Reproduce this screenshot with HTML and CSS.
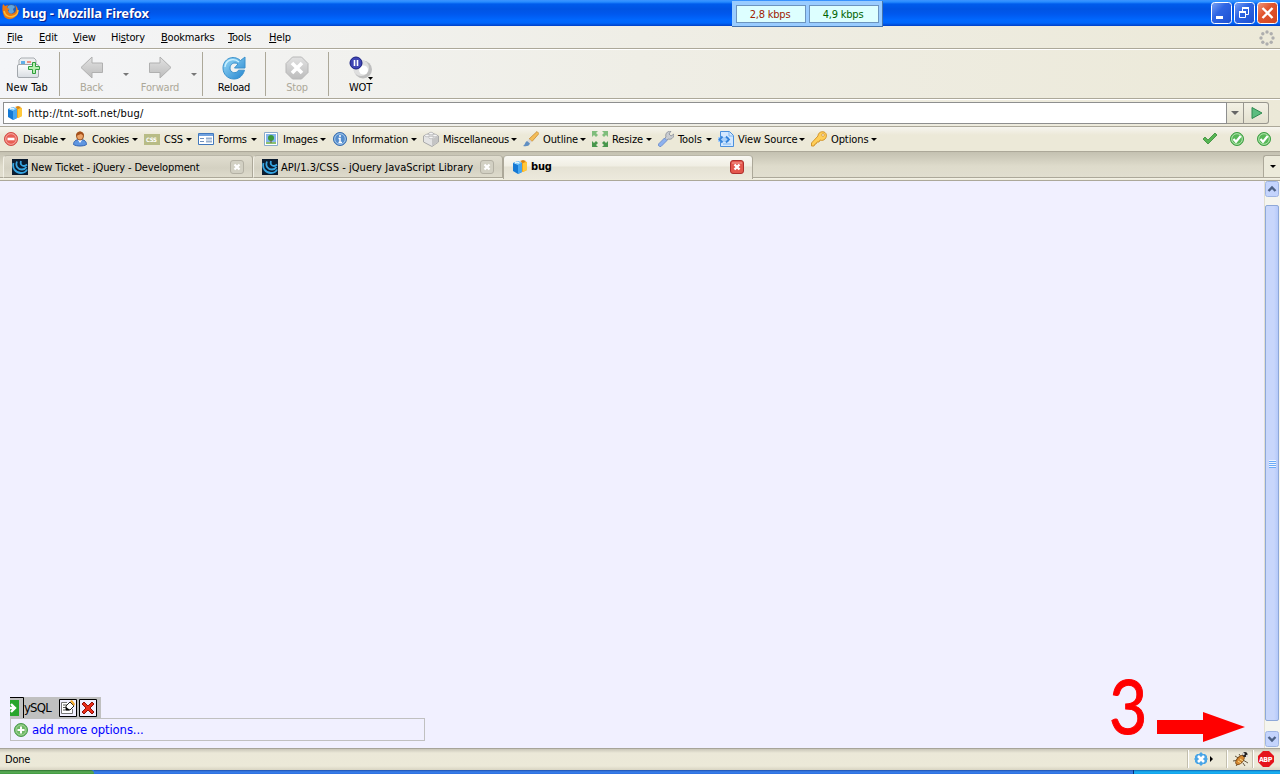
FILE: index.html
```html
<!DOCTYPE html>
<html lang="en">
<head>
  <meta charset="UTF-8">
  <title>bug - Mozilla Firefox</title>
  <link rel="stylesheet" href="styles.css">
</head>
<body>
  <svg class="defs" width="0" height="0">
    <defs>
      <linearGradient id="blue" x1="0" y1="0" x2="1" y2="1"><stop offset="0" stop-color="#9bdcf8"/><stop offset="1" stop-color="#2384cf"/></linearGradient>
      <linearGradient id="winBlue" x1="0" y1="0" x2="1" y2="1"><stop offset="0" stop-color="#7fa4f5"/><stop offset=".4" stop-color="#2f66e4"/><stop offset="1" stop-color="#1c4fd0"/></linearGradient>
      <linearGradient id="winRed" x1="0" y1="0" x2="1" y2="1"><stop offset="0" stop-color="#f09a80"/><stop offset=".4" stop-color="#e2562f"/><stop offset="1" stop-color="#d04420"/></linearGradient>
      <linearGradient id="grey" x1="0" y1="0" x2="0" y2="1"><stop offset="0" stop-color="#e2e2e2"/><stop offset="1" stop-color="#bcbcbc"/></linearGradient>
      <linearGradient id="page" x1="0" y1="0" x2="0" y2="1"><stop offset="0" stop-color="#fff"/><stop offset="1" stop-color="#d8dde2"/></linearGradient>
      <symbol id="boxes" viewBox="0 0 16 16">
        <path d="M8 4l4-2 3 1v8l-4 2-3-1z" fill="#f6a416"/><path d="M11 4l4-1v8l-4 2z" fill="#ffc93c"/>
        <path d="M8 2l3-1 3 1-3 2z" fill="#d88410"/>
        <path d="M1 4l5-2 4 2v9l-4 2-5-3z" fill="#1478d4"/><path d="M1 4l5-2 4 2-4 2z" fill="#8bd0fb"/><path d="M6 6l4-2v9l-4 2z" fill="#46a6f0"/>
        <path d="M3 4l2-1 2 1" stroke="#fff" fill="none"/>
      </symbol>
      <symbol id="jquery" viewBox="0 0 16 16">
        <path d="M0 0h16v16H0z" fill="#0b1c30"/>
        <path d="M1.500 4c-1.500 5 2 10 7.500 10 3 0 5-1 6-3.500M5 2.500c-2 4.500 1 8 5 8 2 0 3.500-1 4.500-2.500M9 2c-1 3 .5 5 3 5 1.500 0 2-.5 3-1.500" fill="none" stroke="#36a5e2" stroke-width="1.800"/>
      </symbol>
      <symbol id="ok" viewBox="0 0 16 16">
        <circle cx="8" cy="8" r="6.500" fill="#58b858" stroke="#3c9e42"/><circle cx="8" cy="8" r="5.300" fill="none" stroke="#b6e5b2"/>
        <path d="M4.500 8l2.500 2.800L11.700 5" fill="none" stroke="#fff" stroke-width="2.200"/>
      </symbol>
      <symbol id="closeTab" viewBox="0 0 14 14">
        <rect x=".5" y=".5" width="13" height="13" rx="2.500" fill="#d2d0c3" stroke="#b4b1a4"/>
        <path d="M4.500 4.500l5 5M9.500 4.500l-5 5" stroke="#fff" stroke-width="2.200"/>
      </symbol>
    </defs>
  </svg>

  <div class="titlebar">
    <svg class="logo" width="17" height="17" viewBox="0 0 17 17">
      <circle cx="9" cy="8" r="7" fill="#2a5fae"/><path d="M6 3c3-2 6-1 7 1l-2 2 1 3-3 2-3-2 1-2-2-1z" fill="#5fa3dc"/>
      <path d="M1 1l2 2 3-1-1 3 3 1-2 1c0 3 3 5 6 3 2-1 3-4 1-8 4 3 4 9 0 12-3 3-9 3-11-1C0 9 0 4 1 1z" fill="#e97813"/>
      <path d="M2 8c1 5 6 7 10 5 3-1 4-4 4-6" fill="none" stroke="#ffbd35" stroke-width="1.400"/>
    </svg>
    <span class="title">bug - Mozilla Firefox</span>
    <div class="window-buttons">
      <svg width="21" height="22" viewBox="0 0 21 22"><rect x=".5" y=".5" width="20" height="21" rx="3" fill="url(#winBlue)" stroke="#fff"/><path d="M5 14h7v3H5z" fill="#fff"/></svg>
      <svg width="21" height="22" viewBox="0 0 21 22"><rect x=".5" y=".5" width="20" height="21" rx="3" fill="url(#winBlue)" stroke="#fff"/><path d="M8.500 9V6.500h6v6H12M5.500 10.500h6v5h-6z" fill="none" stroke="#fff"/><path d="M8 6h7M5 10h7" stroke="#fff" stroke-width="2"/></svg>
      <svg width="21" height="22" viewBox="0 0 21 22"><rect x=".5" y=".5" width="20" height="21" rx="3" fill="url(#winRed)" stroke="#fff"/><path d="M5.500 6l10 10M15.500 6l-10 10" stroke="#fff" stroke-width="2.400"/></svg>
    </div>
    <div class="speed">
      <span class="down">2,8 kbps</span>
      <span class="up">4,9 kbps</span>
    </div>
  </div>

  <div class="menubar">
    <span><u>F</u>ile</span>
    <span><u>E</u>dit</span>
    <span><u>V</u>iew</span>
    <span>Hi<u>s</u>tory</span>
    <span><u>B</u>ookmarks</span>
    <span><u>T</u>ools</span>
    <span><u>H</u>elp</span>
    <svg class="throbber" width="16" height="16" viewBox="0 0 16 16">
      <g fill="#aeaeae"><circle cx="8" cy="2" r="1.700"/><circle cx="12.200" cy="3.800" r="1.700"/><circle cx="14" cy="8" r="1.700"/><circle cx="12.200" cy="12.200" r="1.700"/><circle cx="8" cy="14" r="1.700"/><circle cx="3.800" cy="12.200" r="1.700"/><circle cx="2" cy="8" r="1.700"/><circle cx="3.800" cy="3.800" r="1.700"/></g>
    </svg>
  </div>

  <div class="navbar">
    <div class="nav newtab">
      <svg width="24" height="24" viewBox="0 0 24 24">
        <path d="M3 8V4l2-2h13l2 2v4" fill="#eceef0" stroke="#a9adb1"/><path d="M5 5h4v3H5z" fill="#62aee8"/><path d="M11 6h4" stroke="#ed9082" stroke-width="2"/>
        <rect x="1.500" y="8.500" width="21" height="13" rx="1.500" fill="url(#page)" stroke="#a2a7ac"/>
        <path d="M16.500 6.500h3v4h4v3h-4v4h-3v-4h-4v-3h4z" fill="#b6efae" stroke="#2f9d3c"/>
      </svg>
      <span>New Tab</span>
    </div>
    <div class="nav back off">
      <svg width="24" height="24" viewBox="0 0 24 24"><path d="M1 11.500L12 1v6h10.500v9.500H12V22z" fill="url(#grey)" stroke="#b0b0b0"/></svg>
      <span>Back</span>
    </div>
    <i class="drop off"></i>
    <div class="nav forward off">
      <svg width="24" height="24" viewBox="0 0 24 24"><path d="M23 11.500L12 1v6H1.500v9.500H12V22z" fill="url(#grey)" stroke="#b0b0b0"/></svg>
      <span>Forward</span>
    </div>
    <i class="drop off"></i>
    <div class="nav reload">
      <svg width="24" height="24" viewBox="0 0 24 24">
        <path d="M18.500 4.500L23 1v11H12.500l3.500-4c-4-2.500-8 0-8 4.200 0 5 6.500 6 8.500 2h6C20.500 21 16 23 12 23 5.500 23 1 18 1 12 1 3 11-2 18.500 4.500z" fill="url(#blue)" stroke="#3a91cc"/>
        <path d="M3 11c1-8 9-9 14-5" fill="none" stroke="#caf0ff" stroke-width="1.300"/>
      </svg>
      <span>Reload</span>
    </div>
    <div class="nav stop off">
      <svg width="24" height="24" viewBox="0 0 24 24"><path d="M7.500 1h9L23 7.500v9L16.500 23h-9L1 16.500v-9z" fill="url(#grey)" stroke="#b8b8b8"/><path d="M7 7l10 10M17 7L7 17" stroke="#fff" stroke-width="3.600"/></svg>
      <span>Stop</span>
    </div>
    <div class="nav wot">
      <svg width="24" height="24" viewBox="0 0 24 24">
        <circle cx="14" cy="13.500" r="9" fill="#bfbfbf"/><circle cx="12" cy="12" r="8" fill="#dfdfdf"/><circle cx="14.500" cy="14" r="4.500" fill="#fff"/>
        <circle cx="7" cy="7" r="6" fill="#3f45b4" stroke="#171d80"/><path d="M5.500 4v6M8.500 4v6" stroke="#fff" stroke-width="1.600"/>
        <path d="M19 21h5l-2.500 3z"/>
      </svg>
      <span>WOT</span>
    </div>
  </div>

  <div class="urlbar">
    <div class="url">
      <svg width="16" height="16"><use href="#boxes"/></svg>
      <span>http://tnt-soft.net/bug/</span>
    </div>
    <div class="url-drop"><i class="drop"></i></div>
    <div class="go"><svg width="12" height="12" viewBox="0 0 12 12"><path d="M1 .5L11 6 1 11.500z" fill="#5cbd80" stroke="#2f8a50"/></svg></div>
  </div>

  <div class="devbar">
    <div class="dev disable">
      <svg width="16" height="16" viewBox="0 0 16 16"><circle cx="8" cy="8" r="6.500" fill="#e95f55" stroke="#d04c46"/><circle cx="8" cy="8" r="5.300" fill="none" stroke="#f4aaa2"/><path d="M4.500 8h7" stroke="#fff" stroke-width="2.600"/></svg>
      <span>Disable</span><i class="drop"></i>
    </div>
    <div class="dev cookies">
      <svg width="16" height="16" viewBox="0 0 16 16"><path d="M1.500 13.500c0-3 2-5 6.500-5s6.500 2 6.500 5c-3 2-10 2-13 0z" fill="#5f96e0" stroke="#3465b2"/><path d="M6 9l2 3 2-3" fill="#fff"/><ellipse cx="8" cy="5" rx="3.500" ry="4" fill="#eda468" stroke="#9a5522"/><path d="M4 5c0-6 8-6 8 0L9 3z" fill="#a4501b"/></svg>
      <span>Cookies</span><i class="drop"></i>
    </div>
    <div class="dev css">
      <svg width="16" height="16" viewBox="0 0 16 16"><path d="M0 3h16v11H0z" fill="#b8bc86"/><text x="2" y="11" class="css-mark">CSS</text></svg>
      <span>CSS</span><i class="drop"></i>
    </div>
    <div class="dev forms">
      <svg width="16" height="16" viewBox="0 0 16 16"><path d="M.5 2.500h15v11H.5z" fill="#fff" stroke="#4178bc"/><path d="M1 4h14" stroke="#70a2df" stroke-width="2"/><path d="M2 7.500h4M2 10.500h4" stroke="#7192bd"/><path d="M8 7.500h6M8 10.500h6" stroke="#99b1cf" stroke-width="2"/></svg>
      <span>Forms</span><i class="drop"></i>
    </div>
    <div class="dev images">
      <svg width="16" height="16" viewBox="0 0 16 16"><path d="M1.500 1.500h13v13h-13z" fill="#fff" stroke="#8caacb"/><path d="M3 3h10v8H3z" fill="#86b5ed"/><path d="M3 11h10v2H3z" fill="#8cc070"/><circle cx="8" cy="7" r="3" fill="#3b993b"/><path d="M8 9v3" stroke="#755c37"/></svg>
      <span>Images</span><i class="drop"></i>
    </div>
    <div class="dev information">
      <svg width="16" height="16" viewBox="0 0 16 16"><circle cx="8" cy="8" r="6.500" fill="#558dcc" stroke="#376caf"/><circle cx="8" cy="8" r="5.300" fill="none" stroke="#a7cbed"/><path d="M8 4v2M6.500 7.500H8v3.500M6.500 11.500h3.500" fill="none" stroke="#fff" stroke-width="1.500"/></svg>
      <span>Information</span><i class="drop"></i>
    </div>
    <div class="dev misc">
      <svg width="16" height="16" viewBox="0 0 16 16"><path d="M.5 5L8 1.500 15.500 5v6L9 15.500 .5 11z" fill="#e4e4e4" stroke="#a8a8a8"/><path d="M9 8l6-3v6l-6 4z" fill="#c4c4c4"/><g fill="#f6f6f6" stroke="#b1b1b1" stroke-width=".7"><ellipse cx="8" cy="2.500" rx="2.200" ry="1.300"/><ellipse cx="4" cy="4.500" rx="2.200" ry="1.300"/><ellipse cx="12" cy="4.500" rx="2.200" ry="1.300"/><ellipse cx="8" cy="6.500" rx="2.200" ry="1.300"/></g></svg>
      <span>Miscellaneous</span><i class="drop"></i>
    </div>
    <div class="dev outline">
      <svg width="16" height="16" viewBox="0 0 16 16"><path d="M14 .5l2 2-7 8-3-2.500z" fill="#f4bd58" stroke="#bf8229" stroke-width=".7"/><path d="M6 8l3 2.500-2 2-3-2.500z" fill="#d8d8d8"/><path d="M4 10l3 2.500c-1 3-4 3-7 2.500 2-1 2-4 4-5z" fill="#608fc2"/></svg>
      <span>Outline</span><i class="drop"></i>
    </div>
    <div class="dev resize">
      <svg width="16" height="16" viewBox="0 0 16 16"><path d="M0 0h6L4 2l2 2-2 2-2-2-2 2zM16 0v6l-2-2-2 2-2-2 2-2-2-2z" fill="#7fbd7b"/><path d="M0 16v-6l2 2 2-2 2 2-2 2 2 2zM16 16h-6l2-2-2-2 2-2 2 2 2-2z" fill="#49974d"/></svg>
      <span>Resize</span><i class="drop"></i>
    </div>
    <div class="dev tools">
      <svg width="16" height="16" viewBox="0 0 16 16"><path d="M8 6c-1-3 1-6 5-6l-2 3 2 2 3-2c0 4-3 6-6 5l-2 2-2-2z" fill="#c9ccd1" stroke="#858a94" stroke-width=".8"/><path d="M6.500 7L9 9.500l-6 6C1 16 0 14.500 .5 13z" fill="#8eb2ef" stroke="#6686c7" stroke-width=".8"/></svg>
      <span>Tools</span><i class="drop"></i>
    </div>
    <div class="dev source">
      <svg width="16" height="16" viewBox="0 0 16 16"><path d="M2.500 .5h9l4 4v11h-13z" fill="#d3e8ff" stroke="#4b90dd"/><path d="M11 1v4h4M5 13h8" fill="none" stroke="#7cb5ef"/><path d="M0 6h11v5H0z" fill="#a9d0fa"/><path d="M4.500 5.500L1.500 8.500l3 3M8 5.500l3 3-3 3" fill="none" stroke="#3383db" stroke-width="1.800"/></svg>
      <span>View Source</span><i class="drop"></i>
    </div>
    <div class="dev options">
      <svg width="16" height="16" viewBox="0 0 16 16"><path d="M7 5c0-3 3-5 6-4 3 1 3 5 1 7-1 1-3 2-5 1l-1 2H6l-1 2H4l-1 2H.5v-3z" fill="#ffce57" stroke="#d2952c"/><circle cx="12" cy="4" r="1.300" fill="#fff" stroke="#c98820" stroke-width=".7"/></svg>
      <span>Options</span><i class="drop"></i>
    </div>
    <div class="checks">
      <svg width="16" height="16" viewBox="0 0 16 16"><path d="M1 8l2-2 3 3 7-7 2 2-9 9z" fill="#57b553" stroke="#368c37" stroke-width=".8"/></svg>
      <svg width="16" height="16"><use href="#ok"/></svg>
      <svg width="16" height="16"><use href="#ok"/></svg>
    </div>
  </div>

  <div class="tabs">
    <div class="tab">
      <svg width="16" height="16"><use href="#jquery"/></svg>
      <span>New Ticket - jQuery - Development</span>
      <svg class="close" width="14" height="14"><use href="#closeTab"/></svg>
    </div>
    <div class="tab wide">
      <svg width="16" height="16"><use href="#jquery"/></svg>
      <span>API/1.3/CSS - jQuery JavaScript Library</span>
      <svg class="close" width="14" height="14"><use href="#closeTab"/></svg>
    </div>
    <div class="tab active">
      <svg width="16" height="16"><use href="#boxes"/></svg>
      <span>bug</span>
      <svg class="close" width="14" height="14" viewBox="0 0 14 14"><rect x=".5" y=".5" width="13" height="13" rx="2.500" fill="#e4574d" stroke="#ad2f2d"/><path d="M2 3h10" stroke="#f3a49b"/><path d="M4.500 4.500l5 5M9.500 4.500l-5 5" stroke="#fff" stroke-width="2.400"/></svg>
    </div>
    <div class="all-tabs"><i class="drop"></i></div>
  </div>

  <div class="main">
    <div class="content">
      <div class="option">
        <svg class="arrow-box" width="14" height="22" viewBox="0 0 14 22"><path d="M0 3h9v16H0z" fill="#28a52c"/><path d="M-2 11h6M1 7l4 4-4 4" fill="none" stroke="#fff" stroke-width="2.400"/><path d="M0 .5h13.500v21H0" fill="none" stroke="#000"/></svg>
        <span>ySQL</span>
        <svg width="18" height="18" viewBox="0 0 18 18"><path d="M.5 .5h17v17H.5z" fill="#f1f0ff" stroke="#000"/><path d="M8 3.500H2.500v11h11V10" fill="#fff" stroke="#777"/><path d="M4 6h4M4 8.500h3M4 11h6" stroke="#555"/><path d="M7 11V7l4-4 4 4-4 4z" fill="#fff" stroke="#222"/><path d="M7 8v3h4z"/><path d="M11 2l2-1 3 4-1 2z" fill="#f1a92b"/></svg>
        <svg width="18" height="18" viewBox="0 0 18 18"><path d="M.5 .5h17v17H.5z" fill="#f1f0ff" stroke="#000"/><path d="M3 5l2-2 4 4 4-4 2 2-4 4 4 4-2 2-4-4-4 4-2-2 4-4z" fill="#e82c18" stroke="#931008"/></svg>
      </div>
      <div class="add">
        <svg width="14" height="14" viewBox="0 0 14 14"><circle cx="7" cy="7" r="6.500" fill="#6eb865" stroke="#4a9a4d"/><circle cx="7" cy="7" r="5" fill="none" stroke="#a5d69b"/><path d="M7 3.500v7M3.500 7h7" stroke="#fff" stroke-width="2"/></svg>
        <a>add more options...</a>
      </div>
      <div class="note">
        <span>3</span>
        <svg width="88" height="30" viewBox="0 0 88 30"><path d="M0 8h46V0l42 15-42 15v-8H0z" fill="#f00"/></svg>
      </div>
    </div>
    <div class="scrollbar">
      <svg width="14" height="16" viewBox="0 0 14 16"><rect x=".5" y=".5" width="13" height="15" rx="2" class="scroll-face"/><path d="M3.500 10L7 6.500l3.500 3.500" fill="none" stroke="#4d6185" stroke-width="2.400"/></svg>
      <div class="thumb"><i></i><i></i><i></i><i></i></div>
      <svg width="14" height="16" viewBox="0 0 14 16"><rect x=".5" y=".5" width="13" height="15" rx="2" class="scroll-face"/><path d="M3.500 6L7 9.500 10.500 6" fill="none" stroke="#4d6185" stroke-width="2.400"/></svg>
    </div>
  </div>

  <div class="status">
    <span>Done</span>
    <div class="panel shuffle">
      <svg width="20" height="14" viewBox="0 0 20 14"><path d="M7 0l7 7-7 7-7-7z" fill="#4aa5e6"/><path d="M3 2h8l2 2v6l-2 2H3l-2-2V4z" fill="#4aa5e6"/><path d="M4 4l6 6M10 4l-6 6" stroke="#fff" stroke-width="2.600"/><path d="M16 4v6l3-3z"/></svg>
    </div>
    <div class="panel bug">
      <svg width="16" height="16" viewBox="0 0 16 16"><path d="M2 5l5 3M0 10l6-1M3 15l4-5M6 3l3 4M10 12l2 3M10 9l5 3M9 6l6-1" stroke="#645943"/><ellipse cx="7" cy="9" rx="3" ry="5.500" transform="rotate(40 7 9)" fill="#d78a32" stroke="#845019"/><path d="M5 10l3 2M7 8l3 2" stroke="#ffe08e"/><circle cx="12" cy="3.500" r="2.500" fill="#222"/><circle cx="10.500" cy="3" r="1.200" fill="#ddd"/><circle cx="14" cy="5" r="1.200" fill="#ddd"/></svg>
    </div>
    <div class="panel abp">
      <svg width="16" height="16" viewBox="0 0 16 16"><path d="M5 0h6l5 5v6l-5 5H5l-5-5V5z" fill="#e5131b"/><text x="1" y="10.500" class="abp-mark">ABP</text></svg>
    </div>
  </div>

  <div class="taskbar"><div class="start"></div><div class="tasks"></div><div class="tray"></div></div>
</body>
</html>
```
FILE: styles.css
```css
* {
  box-sizing: border-box;
}

body {
  margin: 0;
  width: 1280px;
  height: 774px;
  overflow: hidden;
  display: flex;
  flex-direction: column;
  font-family: "DejaVu Sans Condensed", "DejaVu Sans", sans-serif;
  font-stretch: condensed;
  font-size: 11px;
  letter-spacing: -0.2px;
  line-height: 14px;
  color: #000;
  background: #ece9d8;
}

svg {
  display: block;
  flex: none;
}

span, a {
  white-space: nowrap;
}

.defs {
  position: absolute;
}

.drop {
  flex: none;
  width: 0;
  height: 0;
  border: 3px solid transparent;
  border-top-color: #000;
  border-bottom: 0;
}

.drop.off {
  border-top-color: #777;
}

/* title bar */
.titlebar {
  position: relative;
  height: 26px;
  flex: none;
  display: flex;
  align-items: center;
  padding: 0 2px;
  background: linear-gradient(#3d95ff 0, #268bff 2px, #005cec 4px, #0054e3 9px, #0058ee 14px, #0068ff 20px, #0066fb 23px, #003fc6 26px);
}

.logo {
  margin-bottom: 3px;
}

.title {
  margin-left: 3px;
  padding-bottom: 1px;
  font: bold 13px "Noto Sans", sans-serif;
  letter-spacing: -0.15px;
  color: #fff;
  text-shadow: 1px 1px 1px #0a1883;
}

.window-buttons {
  margin-left: auto;
  display: flex;
  gap: 2px;
}

.speed {
  position: absolute;
  left: 732px;
  top: 1px;
  width: 151px;
  height: 26px;
  padding: 4px 3px 3px 4px;
  display: flex;
  gap: 3px;
  background: #99ccff;
  border-right: 1px solid #4675ae;
  border-bottom: 1px solid #4675ae;
}

.speed span {
  flex: 1;
  height: 18px;
  padding-right: 2px;
  line-height: 17px;
  text-align: center;
  background: #dff;
  border: 1px solid #6c94bf;
}

.down {
  color: #a02000;
}

.up {
  color: #006400;
}

/* menu and toolbars */
.menubar, .navbar, .urlbar, .devbar {
  flex: none;
  display: flex;
  align-items: center;
  background: linear-gradient(90deg, #f4f5f8, #efeee6 50%, #ece9d8);
  border-bottom: 1px solid #aca899;
}

.menubar {
  height: 23px;
  padding: 1px 5px 0 7px;
}

.menubar span:nth-child(1) { width: 32px; }
.menubar span:nth-child(2) { width: 34px; }
.menubar span:nth-child(3) { width: 38px; }
.menubar span:nth-child(4) { width: 50px; }
.menubar span:nth-child(5) { width: 67px; }
.menubar span:nth-child(6) { width: 41px; }

.menubar span {
  padding-top: 1px;
}

.throbber {
  margin-left: auto;
}

.navbar {
  height: 50px;
  border-top: 1px solid #fff;
}

.nav {
  height: 44px;
  display: flex;
  flex-direction: column;
  align-items: center;
  padding-top: 4px;
  gap: 1px;
}

.nav.off span {
  color: #aca899;
}

.newtab {
  width: 60px;
  padding-right: 5px;
  border-right: 1px solid #aca899;
}

.newtab svg {
  margin-left: 2px;
}

.newtab span {
  letter-spacing: 0.1px;
}

.back {
  width: 63px;
}

.forward {
  width: 62px;
}

.forward + .drop {
  margin-right: 5px;
}

.reload {
  width: 64px;
  border-left: 1px solid #aca899;
  border-right: 1px solid #aca899;
}

.stop {
  width: 63px;
  border-right: 1px solid #aca899;
}

.wot {
  width: 63px;
}

.navbar .drop {
  margin-top: 1px;
}

.urlbar {
  height: 28px;
  padding: 0 11px 0 3px;
  border-top: 1px solid #fff;
}

.url {
  flex: 1;
  height: 22px;
  display: flex;
  align-items: center;
  padding-left: 3px;
  gap: 5px;
  background: #fff;
  border: 1px solid #8e8f8f;
}

.url span {
  padding-top: 2px;
  letter-spacing: 0.18px;
}

.url-drop, .go {
  height: 22px;
  display: flex;
  align-items: center;
  justify-content: center;
  border: 1px solid #98968e;
  border-left: 0;
  background: linear-gradient(#f3f1e5, #e4e1d0);
}

.url-drop {
  width: 17px;
}

.url-drop .drop {
  border-width: 4px 4px 0;
  border-top-color: #666;
}

.go {
  width: 25px;
  padding-left: 2px;
  border-radius: 0 3px 3px 0;
}

.devbar {
  height: 25px;
  padding: 0 8px 0 3px;
  background: linear-gradient(#f6f5ef, #ece9d8 8px);
}

.dev {
  display: flex;
  align-items: center;
  letter-spacing: -0.27px;
}

.dev svg {
  margin-right: 4px;
}

.dev span {
  padding-top: 2px;
}

.dev .drop {
  margin-left: auto;
  margin-right: 6px;
}

.disable { width: 69px; }
.cookies { width: 72px; }
.css { width: 54px; }
.forms { width: 65px; }
.images { width: 69px; }
.information { width: 91px; }
.misc { width: 100px; }
.outline { width: 69px; }
.resize { width: 66px; }
.tools { width: 60px; }
.source { width: 93px; }
.options { width: 72px; }

.information, .outline, .resize, .tools, .source, .options {
  letter-spacing: -0.1px;
}

.css-mark {
  font: bold 6px "DejaVu Sans Condensed", sans-serif;
  letter-spacing: -0.3px;
  fill: #fff;
}

.checks {
  margin-left: auto;
  display: flex;
  gap: 11px;
}

/* tabs */
.tabs {
  flex: none;
  height: 29px;
  display: flex;
  padding: 3px 0 0 3px;
  background: linear-gradient(#c4c1b1, #dedbcb 14px, #e1decf 25px, #aca899 25px, #aca899 26px, #f5f3e8 26px, #ece9d8 28px, #aca899 28px);
}

.tab {
  width: 250px;
  height: 23px;
  display: flex;
  align-items: center;
  padding: 0 8px;
  gap: 3px;
  border: 1px solid #aca899;
  border-top-color: #b9b6a8;
  border-left-color: #f2f0e6;
  border-radius: 4px 4px 0 0;
  background: linear-gradient(#e0ddcf, #d4d1c2 12px, #dedbcc);
  letter-spacing: -0.14px;
}

.tab.wide {
  letter-spacing: 0.04px;
}

.tab span {
  padding-top: 2px;
}

.tab .close {
  margin-left: auto;
}

.tab.active {
  height: 24px;
  padding-bottom: 1px;
  border-bottom: 0;
  border-left-color: #aca899;
  background: linear-gradient(#f9f8f3, #f0eee3 10px, #e5e2d4 11px, #ece9dc);
  font-weight: bold;
}

.tab.active span {
  padding-top: 0;
}

.all-tabs {
  width: 17px;
  height: 23px;
  margin-left: auto;
  display: flex;
  align-items: center;
  justify-content: center;
  padding-left: 2px;
  background: #eceada;
  border: 1px solid #aca899;
  border-right: 0;
  border-radius: 3px 0 0 0;
}

/* page */
.main {
  flex: 1;
  min-height: 0;
  display: flex;
}

.content {
  position: relative;
  flex: 1;
  display: flex;
  flex-direction: column;
  justify-content: flex-end;
  padding: 0 0 7px 10px;
  background: #f1f0ff;
  font-size: 13px;
  letter-spacing: -0.8px;
}

.option {
  width: 91px;
  height: 21px;
  display: flex;
  align-items: center;
  background: #c0c0c0;
}

.option span {
  width: 35px;
}

.option svg + svg {
  margin-left: 2px;
}

.arrow-box {
  align-self: flex-start;
}

.add {
  width: 415px;
  height: 23px;
  display: flex;
  align-items: center;
  padding-left: 3px;
  gap: 4px;
  border: 1px solid #c0c0c0;
}

.add a {
  color: #00f;
  letter-spacing: -0.12px;
}

.note {
  position: absolute;
  left: 1109px;
  bottom: 0;
  height: 86px;
  display: flex;
  color: #f00;
}

.note span {
  width: 48px;
  font: 76px/86px Lato, sans-serif;
  -webkit-text-stroke: 1px #f00;
  transform: scaleX(0.87);
  transform-origin: 0 0;
}

.note svg {
  margin-top: 50px;
}

.scrollbar {
  width: 16px;
  display: flex;
  flex-direction: column;
  padding: 0 1px 1px 0;
  background: #f5f5ef;
  border-left: 1px solid #e2dfd2;
}

.scroll-face {
  fill: #c4d4fd;
  stroke: #9fb5e3;
}

.thumb {
  flex: 1;
  margin: 8px 0 10px;
  display: flex;
  flex-direction: column;
  align-items: center;
  justify-content: center;
  gap: 1px;
  border: 1px solid #8ea8d8;
  border-radius: 2px;
  background: linear-gradient(90deg, #c8d6fb 8px, #b6cafa);
}

.thumb i {
  width: 7px;
  height: 1px;
  background: #eef4fe;
  box-shadow: 0 1px #6aaaf7;
}

/* status bar */
.status {
  flex: none;
  height: 22px;
  display: flex;
  align-items: center;
  padding-left: 5px;
  background: linear-gradient(#85837a 0, #c9c6b8 1px, #ebe8d8 5px, #ece9d8 18px, #d8d4c2);
}

.status span {
  padding-top: 1px;
}

.panel {
  height: 18px;
  display: flex;
  align-items: center;
  justify-content: center;
  border-left: 1px solid #fff;
  box-shadow: -1px 0 #c3bfae;
}

.shuffle {
  width: 39px;
  margin-left: auto;
  padding-right: 8px;
}

.bug {
  width: 26px;
}

.abp {
  width: 27px;
  padding-right: 2px;
}

.abp-mark {
  font: bold 7px "DejaVu Sans Condensed", sans-serif;
  letter-spacing: -0.5px;
  fill: #fff;
}

.taskbar {
  flex: none;
  height: 4px;
  display: flex;
  background: #2c6fe0;
}

.start {
  width: 94px;
  background: linear-gradient(#2c702e, #5cae58 2px, #3f973f);
  border-radius: 0 4px 0 0;
}

.tasks {
  flex: 1;
  background: linear-gradient(#1d4fae, #3a80ea 2px, #2c6fe0);
}

.tray {
  width: 147px;
  border-left: 1px solid #0a2f78;
  background: linear-gradient(#0d65b4, #19b3f2 2px, #14a0ec);
}
```
